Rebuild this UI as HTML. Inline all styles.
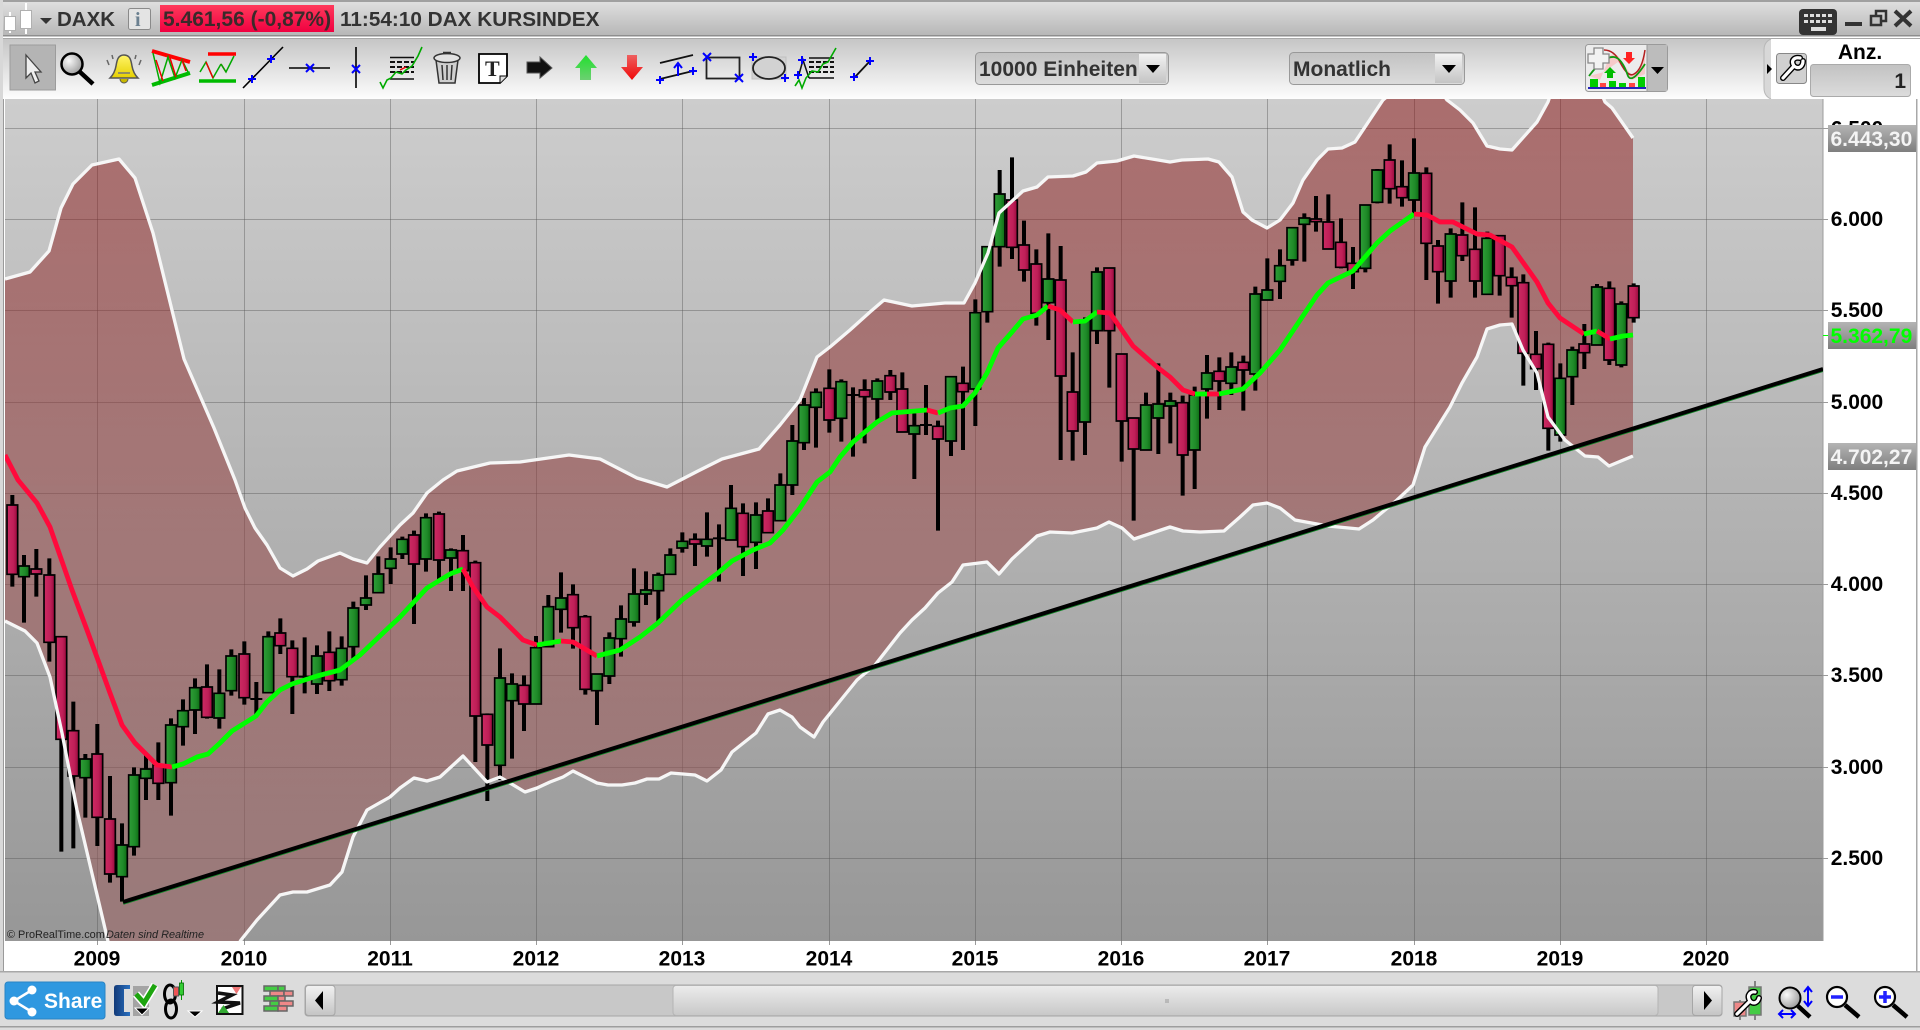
<!DOCTYPE html>
<html><head><meta charset="utf-8"><title>DAXK</title>
<style>
html,body{margin:0;padding:0;background:#fff;overflow:hidden}
svg{display:block}
text{font-family:"Liberation Sans",sans-serif;font-weight:bold}
.r{fill:url(#gr);stroke:#000;stroke-width:5}
.g{fill:url(#gg);stroke:#000;stroke-width:5}
.w{stroke:#000;stroke-width:12;fill:none}
.ma{fill:none;stroke-width:4.800;stroke-linejoin:round}
.mr{stroke:#ff0a3c}
.mg{stroke:#00ff00}
.bx{stroke:#00f;stroke-width:2;fill:none}
</style></head><body>
<svg width="1920" height="1030" viewBox="0 0 1920 1030" xmlns="http://www.w3.org/2000/svg">
<defs>
<linearGradient id="gr" x1="0" x2="1" y1="0" y2="0"><stop offset="0" stop-color="#cc2a62"/><stop offset=".6" stop-color="#bf1f58"/><stop offset="1" stop-color="#960a3c"/></linearGradient>
<linearGradient id="gg" x1="0" x2="1" y1="0" y2="0"><stop offset="0" stop-color="#2f9e38"/><stop offset=".6" stop-color="#1f8a28"/><stop offset="1" stop-color="#0d6a14"/></linearGradient>
<linearGradient id="bg" x1="0" x2="0" y1="0" y2="1"><stop offset="0" stop-color="#cdcdcd"/><stop offset="1" stop-color="#979797"/></linearGradient>
<linearGradient id="band" gradientUnits="userSpaceOnUse" x1="0" x2="0" y1="99" y2="941"><stop offset="0" stop-color="#880f0f" stop-opacity=".5"/><stop offset=".5" stop-color="#933d3d" stop-opacity=".5"/><stop offset="1" stop-color="#9c5e5e" stop-opacity=".5"/></linearGradient>
<linearGradient id="hd" x1="0" x2="0" y1="0" y2="1"><stop offset="0" stop-color="#e0e0e0"/><stop offset="1" stop-color="#b6b6b6"/></linearGradient>
<linearGradient id="tb" x1="0" x2="0" y1="0" y2="1"><stop offset="0" stop-color="#c6c6c6"/><stop offset="1" stop-color="#fdfdfd"/></linearGradient>
<linearGradient id="pr" x1="0" x2="0" y1="0" y2="1"><stop offset="0" stop-color="#ff3a5c"/><stop offset="1" stop-color="#f00040"/></linearGradient>
<linearGradient id="lb" x1="0" x2="0" y1="0" y2="1"><stop offset="0" stop-color="#b4b4b4"/><stop offset="1" stop-color="#7e7e7e"/></linearGradient>
<linearGradient id="sel" x1="0" x2="0" y1="0" y2="1"><stop offset="0" stop-color="#c2c2c2"/><stop offset="1" stop-color="#dcdcdc"/></linearGradient>
<linearGradient id="btn" x1="0" x2="0" y1="0" y2="1"><stop offset="0" stop-color="#f2f2f2"/><stop offset="1" stop-color="#c4c4c4"/></linearGradient>
<linearGradient id="th" x1="0" x2="0" y1="0" y2="1"><stop offset="0" stop-color="#ececec"/><stop offset="1" stop-color="#c8c8c8"/></linearGradient>
<linearGradient id="up" x1="0" x2="0" y1="0" y2="1"><stop offset="0" stop-color="#22e02e"/><stop offset="1" stop-color="#6cd072"/></linearGradient>
<linearGradient id="dn" x1="0" x2="0" y1="0" y2="1"><stop offset="0" stop-color="#ee6060"/><stop offset="1" stop-color="#f00808"/></linearGradient>
<linearGradient id="bell" x1="0" x2="0" y1="0" y2="1"><stop offset="0" stop-color="#fff46a"/><stop offset="1" stop-color="#e6d000"/></linearGradient>
<linearGradient id="blu" x1="0" x2="1" y1="0" y2="0"><stop offset="0" stop-color="#123a78"/><stop offset="1" stop-color="#2a70c0"/></linearGradient>
<radialGradient id="lens" cx=".35" cy=".35" r=".8"><stop offset="0" stop-color="#fafafa"/><stop offset="1" stop-color="#8f8f8f"/></radialGradient>
<clipPath id="cc"><rect x="5" y="99" width="1818" height="842"/></clipPath>
<clipPath id="cp"><rect x="1823" y="99" width="97" height="880"/></clipPath>
</defs>

<rect width="1920" height="1030" fill="#fff"/>
<!-- header -->
<rect x="0" y="1" width="1920" height="35" fill="url(#hd)"/>
<rect x="0" y="0" width="1920" height="2" fill="#a0a0a0"/>
<rect x="0" y="35" width="1920" height="1.500" fill="#8e8e8e"/>
<rect x="0" y="36.500" width="1920" height="1.500" fill="#fff"/>
<rect x="0" y="38" width="1920" height="1" fill="#a8a8a8"/>
<rect x="0" y="39" width="1920" height="60" fill="url(#tb)"/>
<rect x="0" y="0" width="3" height="1030" fill="#d8d8d8"/>
<rect x="3" y="99" width="1" height="880" fill="#9a9a9a"/>

<!-- logo -->
<g stroke="#b0b0b0" stroke-width="1" fill="#fff">
<path d="M10 12V33M26 3V34" stroke="#fff" stroke-width="2"/>
<rect x="4.500" y="16.500" width="11" height="14"/>
<rect x="20.500" y="10.500" width="11" height="18"/>
</g>
<path d="M40 18h12l-6 6z" fill="#333"/>
<text x="57" y="26" font-size="20.500" fill="#333">DAXK</text>
<rect x="128.500" y="8.500" width="22" height="21" rx="2" fill="#e4e4e4" stroke="#8a8a8a"/>
<text x="135" y="26" font-size="20" style="font-family:'Liberation Serif',serif" fill="#6b8090">i</text>
<rect x="160" y="5" width="174" height="27" fill="url(#pr)"/>
<text x="163" y="26" font-size="21" fill="#3a2a2a">5.461,56 (-0,87%)</text>
<text x="340" y="26" font-size="20.750" fill="#333">11:54:10 DAX KURSINDEX</text>

<!-- window buttons -->
<rect x="1799" y="9" width="38" height="26" rx="4" fill="#333"/>
<g fill="#ddd"><rect x="1804" y="14" width="4" height="3"/><rect x="1810" y="14" width="4" height="3"/><rect x="1816" y="14" width="4" height="3"/><rect x="1822" y="14" width="4" height="3"/><rect x="1828" y="14" width="4" height="3"/><rect x="1804" y="20" width="4" height="3"/><rect x="1810" y="20" width="4" height="3"/><rect x="1816" y="20" width="4" height="3"/><rect x="1822" y="20" width="4" height="3"/><rect x="1828" y="20" width="4" height="3"/><rect x="1811" y="27" width="15" height="4"/></g>
<rect x="1845" y="22" width="17" height="4" fill="#333"/>
<g fill="none" stroke="#333" stroke-width="2.500"><rect x="1876" y="11" width="10" height="10"/><rect x="1871" y="16" width="10" height="9" fill="#c0c0c0"/></g>
<path d="M1895 11L1911 26M1911 11L1895 26" stroke="#333" stroke-width="4" fill="none"/>

<!-- toolbar icons -->
<rect x="10" y="45" width="45.500" height="45" fill="#b4b4b4" stroke="#9c9c9c"/>
<path d="M26 55L41 72L35 72L39 81L35 83L31 73L26 78Z" fill="#eee" stroke="#444" stroke-width="1.300"/>
<circle cx="72" cy="64" r="10.500" fill="url(#lens)" stroke="#000" stroke-width="2.500"/>
<path d="M80 72L93 84" stroke="#000" stroke-width="4.500"/>
<g>
<path d="M124 55c-6 0-7 5-8 11c-1 6-3 9-6 12h28c-3-3-5-6-6-12c-1-6-2-11-8-11z" fill="url(#bell)" stroke="#555" stroke-width="1.500"/>
<path d="M118 73h12" stroke="#777" stroke-width="1.500"/>
<path d="M120 79a4 4 0 0 0 8 0" fill="#c9b800" stroke="#555"/>
<path d="M107 60l2 5M112 55l1 4M141 60l-2 5M136 55l-1 4" stroke="#666" stroke-width="1.500"/>
</g>
<path d="M152 51L190 62" stroke="#f00" stroke-width="4"/>
<path d="M152 85L190 73" stroke="#0b0" stroke-width="4"/>
<path d="M153 53L160 83L168 57L175 78L182 60L188 72" fill="none" stroke="#0a0" stroke-width="1.500"/>
<path d="M156 60L163 81M170 58L176 77M182 60L186 71" fill="none" stroke="#e00" stroke-width="1.500"/>
<path d="M208 54H236" stroke="#f00" stroke-width="3.500"/>
<path d="M199 81H236" stroke="#0b0" stroke-width="3.500"/>
<path d="M200 72L206 62L213 78L221 64" fill="none" stroke="#0a0" stroke-width="1.500"/>
<path d="M206 62L213 78M221 64L226 72" fill="none" stroke="#e00" stroke-width="1.500"/>
<path d="M221 64L226 72L234 56" fill="none" stroke="#0a0" stroke-width="1.500"/>
<path d="M243 88L283 47" stroke="#000" stroke-width="1.600"/>
<path class="bx" d="M252 75V83M248 79H256M271 55V63M267 59H275"/>
<path d="M289 68H330" stroke="#000" stroke-width="1.600"/>
<path class="bx" d="M306 64L314 72M314 64L306 72"/>
<path d="M356 47V88" stroke="#000" stroke-width="1.600"/>
<path class="bx" d="M352 65L360 73M360 65L352 73"/>
<g stroke="#111" stroke-width="1.500" fill="none"><path d="M390 57.500H414M390 79H414"/><path d="M390 62H414M390 67H414M390 72H414" stroke-dasharray="5 2" stroke-width="2"/></g>
<path d="M380 82L383 88L387 80L391 78L396 72L402 74L406 70L412 66L418 56L422 47" fill="none" stroke="#0a0" stroke-width="1.600"/>
<path d="M400 70L406 67" stroke="#e00" stroke-width="1.500"/>
<g stroke="#333" fill="#cfcfcf" stroke-width="1.500"><path d="M436 60L439 83H455L458 60Z"/><ellipse cx="447" cy="58" rx="13" ry="4.500" fill="#e2e2e2"/><path d="M443 53h8" stroke-width="2.500" fill="none"/><path d="M442 65l1 15M447 65v15M452 65l-1 15" fill="none"/></g>
<path d="M479 54H507V76L500 83H479Z" fill="#fff" stroke="#000" stroke-width="1.800"/>
<path d="M500 83V76H507" fill="#ddd" stroke="#000"/>
<text x="485" y="76" font-size="22" style="font-family:'Liberation Serif',serif" fill="#222">T</text>
<path d="M527 62H540V57L552 68L540 78V73H527Z" fill="#111" stroke="#555"/>
<path d="M586 55L597 68H591V80H580V68H575Z" fill="url(#up)"/>
<path d="M632 80L621 67H627V55H637V67H643Z" fill="url(#dn)"/>
<path d="M660 63L693 55M660 79L693 71" stroke="#111" stroke-width="1.800"/>
<path class="bx" d="M678 76V65M674 68L678 63L682 68M660 76V84M656 80H664M693 67V75M689 71H697"/>
<rect x="706.500" y="57.500" width="33" height="21" fill="none" stroke="#222" stroke-width="1.800"/>
<path class="bx" d="M703 53L711 61M711 53L703 61M735 74L743 82M743 74L735 82"/>
<rect x="752" y="57" width="34" height="22" fill="#d2d2d2" stroke="#c0c0c0"/>
<ellipse cx="769" cy="68" rx="16" ry="11" fill="none" stroke="#222" stroke-width="1.800"/>
<path class="bx" d="M753 53V61M749 57H757M785 74V82M781 78H789"/>
<g stroke="#111" stroke-width="1.500" fill="none"><path d="M809 58H834M809 78H834"/><path d="M809 62H834M809 67H834M809 72H834" stroke-dasharray="5 2" stroke-width="2"/><path d="M798 78L803 60L809 78"/></g>
<path d="M795 86L799 80L802 88L806 78L812 71L818 72L823 64L828 62L832 55L836 48" fill="none" stroke="#0a0" stroke-width="1.600"/>
<path class="bx" d="M802 56V64M798 60H806M798 71V79M794 75H802"/>
<path d="M855 77L870 61" stroke="#111" stroke-width="1.800"/>
<path class="bx" d="M854 73V81M850 77H858M870 57V65M866 61H874"/>

<!-- dropdowns -->
<rect x="975.500" y="52.500" width="193" height="32" rx="4" fill="url(#sel)" stroke="#999"/>
<rect x="1139" y="54" width="27" height="29" fill="url(#btn)"/>
<path d="M1146 65h14l-7 8z" fill="#000"/>
<text x="979" y="76" font-size="21" fill="#333">10000 Einheiten</text>
<rect x="1289.500" y="52.500" width="175" height="32" rx="4" fill="url(#sel)" stroke="#999"/>
<rect x="1435" y="54" width="27" height="29" fill="url(#btn)"/>
<path d="M1442 65h14l-7 8z" fill="#000"/>
<text x="1293" y="76" font-size="21" fill="#333">Monatlich</text>

<!-- indicator button -->
<rect x="1585.500" y="44.500" width="82" height="47" rx="3" fill="#ececec" stroke="#9a9a9a"/>
<rect x="1647" y="45" width="20" height="46" fill="#bcbcbc"/>
<path d="M1647 45V91" stroke="#999"/>
<path d="M1651 67h13l-6.500 7z" fill="#000"/>
<path d="M1589 76L1600 80L1610 56Q1616 50 1622 62L1632 76L1640 70L1645 52V74L1632 80L1618 62L1604 72Z" fill="#f6caca"/>
<path d="M1604 50Q1614 50 1620 62Q1628 78 1634 74Q1642 70 1645 50" fill="none" stroke="#b32020" stroke-width="1.500"/>
<path d="M1589 76Q1604 56 1614 57Q1622 58 1628 76Q1632 84 1645 64" fill="none" stroke="#119a11" stroke-width="1.800"/>
<path d="M1594 48h9v6h6v9h-6v6h-9v-6h-6v-9h6z" fill="#f2f2f2" stroke="#888" stroke-width="1.300"/>
<path d="M1626 52h6v6h3l-6 6l-6-6h3z" fill="#f22"/>
<path d="M1610 67l6 6h-3v5h-6v-5h-3z" fill="#0b0"/>
<g fill="#0c0"><rect x="1590" y="79" width="8" height="8"/><rect x="1609" y="81" width="7" height="6"/><rect x="1619" y="83" width="7" height="4"/><rect x="1638" y="77" width="7" height="10"/></g>
<g fill="#f44"><rect x="1600" y="83" width="6" height="4"/><rect x="1629" y="83" width="6" height="4"/></g>
<rect x="1588" y="87" width="58" height="2" fill="#22b"/>

<!-- right panel top -->
<path d="M1771 39Q1764 42 1764 50V88Q1764 96 1771 99H1920V39Z" fill="#fff"/>
<path d="M1771 39Q1764 42 1764 50V88Q1764 96 1771 99" fill="#d8d8d8" stroke="#b8b8b8"/>
<path d="M1767 64l5 5l-5 5z" fill="#000"/>
<rect x="1776.500" y="53.500" width="30" height="30" rx="3" fill="#d0d0d0" stroke="#888"/>
<g fill="none" stroke-linecap="round" stroke-linejoin="round"><path d="M1783 78L1794 66C1790 60 1795 57 1800 58M1794 66C1799 70 1803 66 1803 61" stroke="#000" stroke-width="6"/><path d="M1783 78L1794 66C1790 60 1795 57 1800 58M1794 66C1799 70 1803 66 1803 61" stroke="#fff" stroke-width="3.200"/></g>
<text x="1860" y="59" font-size="21" fill="#000" text-anchor="middle">Anz.</text>
<rect x="1810.500" y="64.500" width="100" height="32" rx="3" fill="url(#sel)" stroke="#aaa"/>
<text x="1906" y="88" font-size="21" fill="#222" text-anchor="end">1</text>

<!-- chart -->
<rect x="5" y="99" width="1818" height="842" fill="url(#bg)"/>
<g stroke="#555" stroke-opacity=".42" stroke-width="1">
<path d="M97.500 99V941M244.500 99V941M390.500 99V941M536.500 99V941M682.500 99V941M829.500 99V941M975.500 99V941M1121.500 99V941M1267.500 99V941M1414.500 99V941M1560.500 99V941M1706.500 99V941"/>
<path d="M5 128.500H1823M5 219.500H1823M5 310.500H1823M5 402.500H1823M5 493.500H1823M5 584.500H1823M5 675.500H1823M5 767.500H1823M5 858.500H1823"/>
</g>
<g stroke="#9a9a9a" stroke-width="1">
<path d="M97.500 941V945M244.500 941V945M390.500 941V945M536.500 941V945M682.500 941V945M829.500 941V945M975.500 941V945M1121.500 941V945M1267.500 941V945M1414.500 941V945M1560.500 941V945M1706.500 941V945"/>
<path d="M1823 128.500H1828M1823 219.500H1828M1823 310.500H1828M1823 402.500H1828M1823 493.500H1828M1823 584.500H1828M1823 675.500H1828M1823 767.500H1828M1823 858.500H1828"/>
</g>
<path d="M1823 99V941" stroke="#9c9c9c"/>
<path d="M1823 335.500H1828" stroke="#0f0"/>

<g clip-path="url(#cc)">
<path fill="url(#band)" d="M5 279L30 272L49 251L61 208L73 184L92 165L119 159L135 178L153 233L184 359L214 428L235 480L245 508L255 528L267 545L280 568L293 576L307 569L318 561L340 553L353 559L367 563L380 547L400 525L413 513L427 493L443 480L457 471L490 463L520 462L569 455L600 459L637 478L667 487L698 471L722 459L759 449L780 425L800 400L817 357L830 347L850 330L870 312L884 300L912 306L945 303L964 303L975 283L988 253L999 213L1023 191L1037 187L1048 177L1073 176L1086 172L1097 163L1117 161L1134 156L1170 162L1182 160L1208 159L1219 162L1232 177L1243 212L1252 220L1267 228L1280 220L1293 203L1303 180L1317 160L1328 149L1342 148L1355 142L1383 100L1395 90L1440 90L1447 100L1460 110L1473 123L1487 146L1500 149L1512 150L1537 122L1548 102L1552 90L1600 90L1605 102L1612 108L1633 138L1633 456L1609 466L1598 457L1585 456L1565 440L1548 417L1537 373L1523 350L1512 324L1500 325L1487 329L1477 357L1462 383L1450 407L1425 447L1413 485L1397 500L1373 520L1359 529L1328 526L1295 520L1280 508L1267 503L1253 505L1240 517L1224 531L1200 532L1183 531L1170 527L1134 539L1122 528L1109 522L1097 528L1072 533L1050 532L1037 536L1012 559L999 574L987 562L963 565L952 582L938 593L925 608L912 620L900 633L875 665L857 680L823 722L814 737L800 727L792 717L780 710L768 714L756 733L732 752L721 770L707 781L695 775L671 773L659 779L647 779L635 783L622 785L608 785L597 783L573 771L563 777L550 782L537 788L525 792L500 777L487 782L463 756L440 777L427 781L414 778L400 788L390 797L367 810L353 837L342 872L330 885L307 892L293 892L280 895L257 920L241 940L235 950L110 950L103 920L77 810L62 733L50 677L37 643L25 631L5 621Z"/>

<!-- candles A -->
<g transform="translate(0,480) scale(.33333)">
<path class="w" d="M37 45V320M72 225V428M109 207V350M148 235V545M184 470V1115M220 665V1105M256 822V1013M292 732V1098M330 888V1208M366 1030V1265M402 862V1127M438 825V960M475 787V960M513 715V1007M549 658V797M585 595V762M621 553V716M658 568V746M694 508V647M733 484V674M769 606V705M805 454V640M841 415V522M877 481V702M914 472V640M951 496V642M988 454V633M1025 469V617M1060 365V540M1098 286V390M1135 229V340M1172 202V312"/>
<path class="r" d="M21 75h32V283h-32z"/><path class="g" d="M56 258h32V290h-32z"/><path class="r" d="M93 267h32V282h-32z"/><path class="r" d="M132 285h32V487h-32z"/><path class="r" d="M168 470h32V778h-32z"/><path class="r" d="M204 752h32V888h-32z"/><path class="g" d="M240 837h32V893h-32z"/><path class="r" d="M276 822h32V1012h-32z"/><path class="r" d="M314 1017h32V1182h-32z"/><path class="g" d="M350 1095h32V1190h-32z"/><path class="g" d="M386 885h32V1100h-32z"/><path class="g" d="M422 867h32V895h-32z"/><path class="r" d="M459 855h32V910h-32z"/><path class="g" d="M497 735h32V908h-32z"/><path class="g" d="M533 692h32V740h-32z"/><path class="g" d="M569 623h32V690h-32z"/><path class="r" d="M605 621h32V712h-32z"/><path class="g" d="M642 640h32V714h-32z"/><path class="g" d="M678 528h32V632h-32z"/><path class="r" d="M717 522h32V653h-32z"/><path d="M751 657h36" stroke="#000" stroke-width="6"/><path class="g" d="M789 470h32V638h-32z"/><path class="r" d="M825 459h32V497h-32z"/><path class="r" d="M861 505h32V590h-32z"/><path d="M896 590h36" stroke="#000" stroke-width="6"/><path class="g" d="M935 528h32V612h-32z"/><path class="r" d="M972 517h32V602h-32z"/><path class="g" d="M1009 505h32V599h-32z"/><path class="g" d="M1044 384h32V500h-32z"/><path class="g" d="M1082 354h32V375h-32z"/><path class="g" d="M1119 282h32V338h-32z"/><path class="g" d="M1156 237h32V265h-32z"/>
</g>
<!-- candles B -->
<g transform="translate(400,480) scale(.33333)">
<path class="w" d="M7 170V237M42 152V432M78 100V275M117 95V300M153 205V333M189 165V333M226 242V846M262 700V963M300 505V900M336 580V836M372 586V753M408 468V672M445 345V502M483 277V458M519 313V506M556 405V644M591 582V735M628 457V612M663 376V530M702 265V440M738 274V375M775 278V425M811 205V283M847 157V218M885 160V258M921 97V230M957 133V305M993 15V180M1029 70V288M1068 67V267M1104 55V158M1141 -20V122M1177 -165V45"/>
<path class="g" d="M-9 178h32V222h-32z"/><path class="r" d="M26 165h32V252h-32z"/><path class="g" d="M62 113h32V237h-32z"/><path class="r" d="M101 102h32V240h-32z"/><path class="g" d="M137 210h32V234h-32z"/><path class="r" d="M173 212h32V272h-32z"/><path class="r" d="M210 248h32V708h-32z"/><path class="r" d="M246 703h32V795h-32z"/><path class="g" d="M284 594h32V856h-32z"/><path class="g" d="M320 612h32V662h-32z"/><path class="r" d="M356 616h32V672h-32z"/><path class="g" d="M392 503h32V672h-32z"/><path class="g" d="M429 380h32V500h-32z"/><path class="g" d="M467 354h32V388h-32z"/><path class="r" d="M503 344h32V443h-32z"/><path class="r" d="M540 410h32V628h-32z"/><path class="g" d="M575 582h32V632h-32z"/><path class="g" d="M612 474h32V588h-32z"/><path class="g" d="M647 417h32V476h-32z"/><path class="g" d="M686 342h32V426h-32z"/><path class="g" d="M722 330h32V342h-32z"/><path class="g" d="M759 285h32V332h-32z"/><path class="g" d="M795 225h32V283h-32z"/><path class="g" d="M831 184h32V204h-32z"/><path class="r" d="M869 178h32V192h-32z"/><path class="g" d="M905 178h32V198h-32z"/><path d="M939 175h36" stroke="#000" stroke-width="6"/><path class="g" d="M977 85h32V180h-32z"/><path class="r" d="M1013 100h32V200h-32z"/><path class="g" d="M1052 105h32V187h-32z"/><path class="r" d="M1088 93h32V158h-32z"/><path class="g" d="M1125 15h32V122h-32z"/><path class="g" d="M1161 -117h32V15h-32z"/>
</g>
<!-- candles C -->
<g transform="translate(800,330) scale(.33333)">
<path class="w" d="M12 204V360M48 175V353M88 118V308M124 148V335M159 172V380M194 148V340M232 145V280M271 120V210M307 127V300M343 250V447M378 165V315M414 272V602M453 140V378"/>
<path class="g" d="M-4 225h32V338h-32z"/><path class="g" d="M32 187h32V232h-32z"/><path class="r" d="M72 175h32V270h-32z"/><path class="g" d="M108 155h32V265h-32z"/><path d="M141 195h36" stroke="#000" stroke-width="6"/><path class="r" d="M178 180h32V200h-32z"/><path class="g" d="M216 153h32V207h-32z"/><path class="r" d="M255 137h32V186h-32z"/><path class="r" d="M291 177h32V306h-32z"/><path class="g" d="M327 287h32V312h-32z"/><path d="M360 285h36" stroke="#000" stroke-width="6"/><path class="r" d="M398 289h32V327h-32z"/><path class="g" d="M437 140h32V333h-32z"/>
</g>
<!-- candles D -->
<g transform="translate(960,110) scale(.33333)">
<path class="w" d="M9 770V1020M46 568V948M82 410V638M119 180V470M156 142V447M192 332V515M229 418V647M265 370V690M302 408V1050M338 727V1052M375 622V1035M411 472V702M448 473V833M485 732V1055M521 924V1232M558 848V1020M595 760V1032M631 848V1000M668 857V1157M704 830V1137M741 735V926M778 742V900M814 727V855"/>
<path class="r" d="M-7 820h32V845h-32z"/><path class="g" d="M30 608h32V837h-32z"/><path class="g" d="M66 410h32V605h-32z"/><path class="g" d="M103 252h32V410h-32z"/><path class="r" d="M140 270h32V412h-32z"/><path class="r" d="M176 405h32V480h-32z"/><path class="r" d="M213 462h32V610h-32z"/><path class="g" d="M249 507h32V578h-32z"/><path class="r" d="M286 510h32V798h-32z"/><path class="r" d="M322 846h32V963h-32z"/><path class="g" d="M359 630h32V936h-32z"/><path class="g" d="M395 486h32V662h-32z"/><path class="r" d="M432 474h32V662h-32z"/><path class="r" d="M469 732h32V933h-32z"/><path class="r" d="M505 924h32V1017h-32z"/><path class="g" d="M542 885h32V1020h-32z"/><path class="g" d="M579 882h32V924h-32z"/><path class="g" d="M615 873h32V888h-32z"/><path class="r" d="M652 878h32V1035h-32z"/><path class="g" d="M688 855h32V1020h-32z"/><path class="g" d="M725 789h32V837h-32z"/><path class="r" d="M762 784h32V813h-32z"/><path class="g" d="M798 771h32V820h-32z"/>
</g>
<!-- candles E -->
<g transform="translate(1240,100) scale(.33333)">
<path class="w" d="M10 767V932M46 560V872M82 475V600M120 448V597M157 383V497M193 340V485M228 288V395M265 283V448M303 355V505M339 441V567M376 315V517M412 207V310M449 133V311M486 181V320M522 115V340M559 202V540M594 420V611M632 385V593M667 307V483M705 322V593M742 395V583M779 407V587M815 502V653M850 523V857M888 693V870M925 728V1052M961 790V1025M997 740V915M1033 672V807M1071 552V735M1108 544V795M1144 604V802M1181 550V668"/>
<path class="r" d="M-6 787h32V810h-32z"/><path class="g" d="M30 582h32V822h-32z"/><path class="g" d="M66 570h32V600h-32z"/><path class="g" d="M104 497h32V544h-32z"/><path class="g" d="M141 383h32V480h-32z"/><path class="g" d="M177 354h32V373h-32z"/><path class="r" d="M212 357h32V365h-32z"/><path class="r" d="M249 366h32V447h-32z"/><path class="r" d="M287 427h32V502h-32z"/><path class="r" d="M323 490h32V515h-32z"/><path class="g" d="M360 315h32V505h-32z"/><path class="g" d="M396 210h32V307h-32z"/><path class="r" d="M433 180h32V266h-32z"/><path class="r" d="M470 260h32V293h-32z"/><path class="g" d="M506 219h32V300h-32z"/><path class="r" d="M543 220h32V430h-32z"/><path class="r" d="M578 438h32V515h-32z"/><path class="g" d="M616 402h32V543h-32z"/><path class="r" d="M651 405h32V467h-32z"/><path class="r" d="M689 448h32V543h-32z"/><path class="g" d="M726 415h32V583h-32z"/><path class="r" d="M763 407h32V527h-32z"/><path class="r" d="M799 532h32V557h-32z"/><path class="r" d="M834 548h32V760h-32z"/><path class="r" d="M872 763h32V806h-32z"/><path class="r" d="M909 733h32V985h-32z"/><path class="g" d="M945 835h32V1005h-32z"/><path class="g" d="M981 750h32V830h-32z"/><path class="r" d="M1017 732h32V758h-32z"/><path class="g" d="M1055 561h32V735h-32z"/><path class="r" d="M1092 565h32V780h-32z"/><path class="g" d="M1128 612h32V795h-32z"/><path class="r" d="M1165 558h32V653h-32z"/>
</g>

<!-- band outlines -->
<g fill="none" stroke="#f6f6f6" stroke-width="3.300" stroke-linejoin="round">
<path d="M5 279L30 272L49 251L61 208L73 184L92 165L119 159L135 178L153 233L184 359L214 428L235 480L245 508L255 528L267 545L280 568L293 576L307 569L318 561L340 553L353 559L367 563L380 547L400 525L413 513L427 493L443 480L457 471L490 463L520 462L569 455L600 459L637 478L667 487L698 471L722 459L759 449L780 425L800 400L817 357L830 347L850 330L870 312L884 300L912 306L945 303L964 303L975 283L988 253L999 213L1023 191L1037 187L1048 177L1073 176L1086 172L1097 163L1117 161L1134 156L1170 162L1182 160L1208 159L1219 162L1232 177L1243 212L1252 220L1267 228L1280 220L1293 203L1303 180L1317 160L1328 149L1342 148L1355 142L1383 100L1395 90L1440 90L1447 100L1460 110L1473 123L1487 146L1500 149L1512 150L1537 122L1548 102L1552 90L1600 90L1605 102L1612 108L1633 138"/>
<path d="M5 621L25 631L37 643L50 677L62 733L77 810L103 920L110 950M235 950L241 940L257 920L280 895L293 892L307 892L330 885L342 872L353 837L367 810L390 797L400 788L414 778L427 781L440 777L463 756L487 782L500 777L525 792L537 788L550 782L563 777L573 771L597 783L608 785L622 785L635 783L647 779L659 779L671 773L695 775L707 781L721 770L732 752L756 733L768 714L780 710L792 717L800 727L814 737L823 722L857 680L875 665L900 633L912 620L925 608L938 593L952 582L963 565L987 562L999 574L1012 559L1037 536L1050 532L1072 533L1097 528L1109 522L1122 528L1134 539L1170 527L1183 531L1200 532L1224 531L1240 517L1253 505L1267 503L1280 508L1295 520L1328 526L1359 529L1373 520L1397 500L1413 485L1425 447L1450 407L1462 383L1477 357L1487 329L1500 325L1512 324L1523 350L1537 373L1548 417L1565 440L1585 456L1598 457L1609 466L1633 456"/>
</g>

<!-- moving average -->
<path class="ma mr" d="M5 455L18 480L37 503L50 527L72 590L87 630L110 693L122 725L135 743L157 765L172 767"/>
<path class="ma mg" d="M172 767L183 764L197 757L208 754L220 743L232 731L256 716L267 702L280 690L292 684L317 676L340 670L360 655L383 633L400 617L413 603L427 588L450 574L463 569"/>
<path class="ma mr" d="M463 569L473 587L487 607L500 617L523 640L537 645"/>
<path class="ma mg" d="M537 645L561 641"/>
<path class="ma mr" d="M561 641L573 642L597 656"/>
<path class="ma mg" d="M597 656L620 650L640 637L658 623L682 600L718 573L732 561L753 550L770 543L783 530L800 508L817 482L830 472L840 457L853 442L877 422L892 413L927 410"/>
<path class="ma mr" d="M927 410L938 413"/>
<path class="ma mg" d="M938 413L950 408L963 406L975 393L987 373L998 348L1012 332L1023 319L1037 315L1048 306"/>
<path class="ma mr" d="M1048 306L1060 310L1073 322"/>
<path class="ma mg" d="M1073 322L1085 321L1097 312"/>
<path class="ma mr" d="M1097 312L1110 313L1133 346L1157 367L1170 377L1183 390L1195 394"/>
<path class="ma mg" d="M1195 394L1207 394"/>
<path class="ma mr" d="M1207 394L1219 394"/>
<path class="ma mg" d="M1219 394L1243 389L1260 373L1280 350L1317 295L1328 283L1353 271L1377 243L1390 231L1414 214"/>
<path class="ma mr" d="M1414 214L1427 215L1440 222L1453 222L1477 234L1490 235L1512 247L1537 282L1548 303L1560 318L1584 334"/>
<path class="ma mg" d="M1584 334L1597 331"/>
<path class="ma mr" d="M1597 331L1610 339"/>
<path class="ma mg" d="M1610 339L1623 336L1633 335"/>

<!-- trend line -->
<path d="M123 902.900L1823 369.900" stroke="#138a2a" stroke-width="4" fill="none"/>
<path d="M123 902L1823 369" stroke="#000" stroke-width="4" fill="none"/>

<text x="7" y="938" font-size="10.900" fill="#222" style="font-weight:normal">© ProRealTime.com</text>
<text x="106" y="938" font-size="10.900" fill="#222" style="font-weight:normal;font-style:italic">Daten sind Realtime</text>
</g>

<!-- price axis -->
<g clip-path="url(#cp)" font-size="21" fill="#000">
<text x="1830.700" y="135.500">6.500</text>
<text x="1830.700" y="226">6.000</text>
<text x="1830.700" y="317">5.500</text>
<text x="1830.700" y="409">5.000</text>
<text x="1830.700" y="500">4.500</text>
<text x="1830.700" y="591">4.000</text>
<text x="1830.700" y="682">3.500</text>
<text x="1830.700" y="774">3.000</text>
<text x="1830.700" y="865">2.500</text>
</g>
<rect x="1828" y="125" width="88" height="27" fill="url(#lb)"/>
<text x="1830.500" y="146" font-size="21" fill="#f4f4f4">6.443,30</text>
<rect x="1828" y="322" width="88" height="27" fill="url(#lb)"/>
<text x="1830.500" y="343" font-size="21" fill="#00ff00">5.362,79</text>
<rect x="1828" y="443" width="88" height="27" fill="url(#lb)"/>
<text x="1830.500" y="464" font-size="21" fill="#f4f4f4">4.702,27</text>

<!-- time axis -->
<g font-size="21" fill="#000" text-anchor="middle">
<text x="97" y="965.500">2009</text><text x="244" y="965.500">2010</text><text x="390" y="965.500">2011</text><text x="536" y="965.500">2012</text><text x="682" y="965.500">2013</text><text x="829" y="965.500">2014</text><text x="975" y="965.500">2015</text><text x="1121" y="965.500">2016</text><text x="1267" y="965.500">2017</text><text x="1414" y="965.500">2018</text><text x="1560" y="965.500">2019</text><text x="1706" y="965.500">2020</text>
</g>

<!-- bottom bar -->
<rect x="0" y="971" width="1920" height="59" fill="#dcdcdc"/>
<rect x="0" y="971" width="1920" height="1.500" fill="#a8a8a8"/>
<rect x="0" y="1026" width="1920" height="1.500" fill="#9e9e9e"/>
<rect x="1916" y="99" width="1.500" height="872" fill="#a8a8a8"/>
<rect x="5" y="982" width="100" height="37" rx="3" fill="#2f98e0" stroke="#2a84c4"/>
<g fill="#fff"><circle cx="14" cy="1001" r="4.500"/><circle cx="32" cy="990" r="4.500"/><circle cx="32" cy="1012" r="4.500"/></g>
<path d="M32 990L14 1001L32 1012" stroke="#fff" stroke-width="2.500" fill="none"/>
<text x="44" y="1008" font-size="21" fill="#fff">Share</text>

<path d="M117 985H130V989H124V1012H130V1016H117Q114 1016 114 1013V988Q114 985 117 985Z" fill="url(#blu)"/>
<rect x="133" y="986" width="16" height="30" fill="#a4a4a4"/>
<path d="M136 994L144 1003L155 985" fill="none" stroke="#fff" stroke-width="8"/>
<path d="M136 994L144 1003L155 985" fill="none" stroke="#1da50f" stroke-width="5"/>
<path d="M135 1008h14l-7 7z" fill="#000" stroke="#fff"/>
<ellipse cx="170" cy="994" rx="5.500" ry="9" fill="none" stroke="#000" stroke-width="3"/>
<ellipse cx="171" cy="1009" rx="5.500" ry="9" fill="none" stroke="#000" stroke-width="3"/>
<rect x="173.500" y="987" width="5" height="9" fill="#e55" stroke="#555"/>
<path d="M181.500 980V1000" stroke="#090"/>
<rect x="179.500" y="983" width="4" height="12" fill="#3c3" stroke="#060" stroke-width=".8"/>
<path d="M188 1011h14l-7 6z" fill="#000" stroke="#fff"/>
<rect x="217" y="986" width="25.500" height="28" fill="#fff" stroke="#111" stroke-width="2"/>
<path d="M218 993L232 995L218 1002L240 1003L222 1009" fill="none" stroke="#111" stroke-width="3.500"/>
<path d="M232 987l9 0l-4.500 7z" fill="#e77"/>
<path d="M218 1013l11 0l-5.500-8z" fill="#3a3"/>
<g stroke="#666" stroke-width="1.500">
<rect x="264" y="986" width="14" height="5" fill="#4c4"/><rect x="278" y="986" width="7" height="5" fill="#4c4"/>
<rect x="270" y="991" width="14" height="5" fill="#e88"/><rect x="284" y="991" width="9" height="5" fill="#e88"/>
<rect x="264" y="996" width="14" height="5" fill="#4c4"/><rect x="278" y="996" width="7" height="5" fill="#e88"/>
<rect x="270" y="1001" width="9" height="5" fill="#4c4"/><rect x="279" y="1001" width="14" height="5" fill="#e88"/>
<rect x="264" y="1006" width="14" height="5" fill="#4c4"/><rect x="278" y="1006" width="9" height="5" fill="#e88"/>
</g>
<!-- scrollbar -->
<rect x="305" y="985" width="1417" height="31" rx="3" fill="#c8c8c8" stroke="#a6a6a6"/>
<rect x="673" y="985.500" width="985" height="30" rx="3" fill="url(#th)" stroke="#b4b4b4"/>
<path d="M1165 1000h4M1165 1002h4" stroke="#999"/>
<rect x="305.500" y="985.500" width="29.500" height="30" rx="3" fill="url(#btn)" stroke="#a6a6a6"/>
<path d="M323 991V1010L315 1000.500Z" fill="#000"/>
<rect x="1692.500" y="985.500" width="29.500" height="30" rx="3" fill="url(#btn)" stroke="#a6a6a6"/>
<path d="M1704 991V1010L1712 1000.500Z" fill="#000"/>
<!-- right icons -->
<path d="M1740 1000V1020M1755 981V1020" stroke="#666" stroke-width="1.500"/>
<rect x="1734" y="1002" width="12" height="14" fill="#e88" stroke="#777" stroke-width="1.500"/>
<rect x="1749" y="987" width="12" height="28" fill="#4c4" stroke="#777" stroke-width="1.500"/>
<g fill="none" stroke-linecap="round" stroke-linejoin="round"><path d="M1737 1014L1750 1001C1746 995 1751 991 1755 992M1750 1001C1754 1005 1758 1002 1759 998" stroke="#000" stroke-width="6"/><path d="M1737 1014L1750 1001C1746 995 1751 991 1755 992M1750 1001C1754 1005 1758 1002 1759 998" stroke="#fff" stroke-width="3.200"/></g>
<circle cx="1790" cy="998" r="10.500" fill="url(#lens)" stroke="#000" stroke-width="2"/>
<path d="M1798 1006L1810 1017" stroke="#000" stroke-width="4.500"/>
<path d="M1808 988V1005M1804 992l4-5l4 5M1804 1001l4 5l4-5" stroke="#00f" stroke-width="2" fill="none"/>
<path d="M1779 1014H1795M1783 1010l-4 4l4 4M1791 1010l4 4l-4 4" stroke="#00f" stroke-width="2" fill="none"/>
<circle cx="1837" cy="997" r="10" fill="#fff" stroke="#000" stroke-width="2.200"/>
<path d="M1831 997H1843" stroke="#22f" stroke-width="3.500"/>
<path d="M1845 1005L1859 1017" stroke="#000" stroke-width="4.500"/>
<circle cx="1885" cy="997" r="10" fill="#fff" stroke="#000" stroke-width="2.200"/>
<path d="M1879 997H1891M1885 991V1003" stroke="#22f" stroke-width="3.500"/>
<path d="M1893 1005L1907 1017" stroke="#000" stroke-width="4.500"/>
</svg>
</body></html>
